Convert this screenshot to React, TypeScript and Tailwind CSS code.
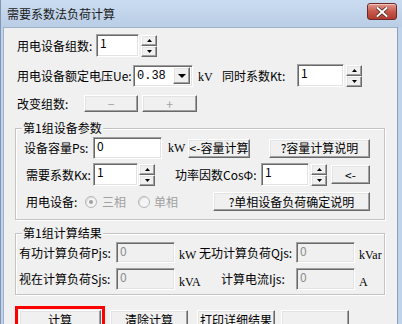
import type { ReactNode } from "react";

const sunken =
  "border border-t-[#a0a0a0] border-l-[#a0a0a0] border-r-white border-b-white shadow-[inset_1px_1px_#696969,inset_-1px_-1px_#e3e3e3]";
const raised =
  "border border-t-white border-l-white border-r-[#696969] border-b-[#696969] shadow-[inset_-1px_-1px_#a0a0a0,inset_1px_1px_#e3e3e3] bg-[#f0f0f0]";

function Field({ className, value, off }: { className: string; value: string; off?: boolean }) {
  return (
    <div
      className={`${sunken} ${off ? "bg-[#f0f0f0] text-[#8d8d8d]" : "bg-white text-black"} pl-[3px] pt-[1px] leading-[14px] ${className}`}
    >
      {value}
    </div>
  );
}

function Spin({ className }: { className: string }) {
  return (
    <div className={`flex flex-col ${className}`}>
      <div className={`${raised} flex flex-1 items-center justify-center`}>
        <svg width="5" height="3" viewBox="0 0 5 3">
          <path d="M2.5 0L5 3H0z" fill="#000" />
        </svg>
      </div>
      <div className={`${raised} flex flex-1 items-center justify-center`}>
        <svg width="5" height="3" viewBox="0 0 5 3">
          <path d="M0 0H5L2.5 3z" fill="#000" />
        </svg>
      </div>
    </div>
  );
}

function Btn({ className, children }: { className: string; children?: ReactNode }) {
  return (
    <div className={`${raised} flex items-center justify-center leading-[14px] ${className}`}>{children}</div>
  );
}

function Radio({ on }: { on?: boolean }) {
  return (
    <div className="flex h-[12px] w-[12px] items-center justify-center rounded-full border border-[#b5b5b5] bg-[#f4f4f4] shadow-[inset_1px_1px_#dcdcdc]">
      {on && <div className="h-[4px] w-[4px] rounded-full bg-[#a0a0a0]" />}
    </div>
  );
}

const unit = "font-['Liberation_Serif',serif] text-[12px] leading-[14px]";

export default function App() {
  return (
    <div className="flex h-[324px] w-[402px] flex-col overflow-hidden bg-[#bfd3ea] font-['Noto_Sans_CJK_SC',sans-serif] text-[12px] leading-[14px] text-black">
      {/* title bar */}
      <div className="flex h-[27px] shrink-0 items-center border-l border-[#7f97b3] bg-gradient-to-b from-[#cadcf0] to-[#b9cde5] pl-[6px] pr-[5px]">
        <div className="flex-1 text-[12px] text-[#1b1b1b]">需要系数法负荷计算</div>
        <div className="mb-[4px] flex h-[17px] w-[30px] items-center justify-center rounded-[3px] border border-[#6b2a28] bg-gradient-to-b from-[#e0988c] via-[#c8584b] to-[#b2392f] shadow-[inset_0_1px_#f1c3bb]">
          <svg width="12" height="10" viewBox="0 0 12 10">
            <path d="M1.5 1l9 8M10.5 1l-9 8" stroke="#4a2320" strokeWidth="3.4" strokeLinecap="square" />
            <path d="M1.5 1l9 8M10.5 1l-9 8" stroke="#fff" strokeWidth="2" strokeLinecap="square" />
          </svg>
        </div>
      </div>

      <div className="flex flex-1">
        <div className="w-[3px] border-l border-[#7f97b3]" />
        <div className="flex flex-1 flex-col border-l border-t border-[#9fb1c6] bg-[#f0f0f0]">
          {/* row 1 */}
          <div className="mt-[6px] flex h-[23px] items-center">
            <div className="ml-[13px] w-[79px] whitespace-nowrap">用电设备组数:</div>
            <Field className="h-[23px] w-[43px]" value="1" />
            <Spin className="ml-[2px] h-[22px] w-[16px]" />
          </div>

          {/* row 2 */}
          <div className="mt-[7px] flex h-[23px] items-center">
            <div className="ml-[13px] w-[116px] whitespace-nowrap">用电设备额定电压Ue:</div>
            <div className={`${sunken} flex h-[22px] w-[60px] items-center bg-white pl-[3px] pr-[2px]`}>
              <span className="flex-1 font-['Liberation_Mono',monospace] text-[12px]">0.38</span>
              <div className={`${raised} flex h-[17px] w-[17px] items-center justify-center`}>
                <svg width="8" height="4" viewBox="0 0 8 4">
                  <path d="M0 0H8L4 4z" fill="#000" />
                </svg>
              </div>
            </div>
            <div className={`ml-[5px] w-[24px] pt-[3px] ${unit}`}>kV</div>
            <div className="w-[75px] whitespace-nowrap">同时系数Kt:</div>
            <Field className="h-[23px] w-[47px]" value="1" />
            <Spin className="ml-[2px] h-[22px] w-[16px]" />
          </div>

          {/* row 3 */}
          <div className="mt-[8px] flex h-[17px] items-center">
            <div className="ml-[13px] w-[67px] whitespace-nowrap">改变组数:</div>
            <Btn className="h-[17px] w-[54px] text-[#a0a0a0]">−</Btn>
            <Btn className="ml-[4px] h-[17px] w-[55px] text-[#a0a0a0]">+</Btn>
          </div>

          {/* group 1 */}
          <div className="relative ml-[11px] mt-[16px] h-[92px] w-[370px] border border-[#c4c4c4] shadow-[1px_1px_#ffffff,inset_1px_1px_#ffffff]">
            <span className="absolute -top-[8px] left-[6px] bg-[#f0f0f0] px-[1px]">第1组设备参数</span>

            <div className="mt-[8px] flex h-[22px] items-center">
              <div className="ml-[8px] w-[69px] whitespace-nowrap">设备容量Ps:</div>
              <Field className="h-[22px] w-[69px]" value="0" />
              <div className={`ml-[6px] w-[20px] ${unit}`}>kW</div>
              <Btn className="h-[19px] w-[62px]">&lt;-容量计算</Btn>
              <Btn className="ml-[19px] h-[19px] w-[101px]">?容量计算说明</Btn>
            </div>

            <div className="mt-[4px] flex h-[23px] items-center">
              <div className="ml-[10px] w-[67px] whitespace-nowrap">需要系数Kx:</div>
              <Field className="h-[23px] w-[45px]" value="1" />
              <Spin className="ml-[1px] h-[22px] w-[16px]" />
              <div className="ml-[20px] w-[86px] whitespace-nowrap">功率因数CosΦ:</div>
              <Field className="h-[23px] w-[48px]" value="1" />
              <Spin className="ml-[2px] h-[22px] w-[16px]" />
              <Btn className="ml-[4px] h-[19px] w-[39px]">&lt;-</Btn>
            </div>

            <div className="mt-[6px] flex h-[19px] items-center">
              <div className="ml-[10px] w-[59px] whitespace-nowrap">用电设备:</div>
              <Radio on />
              <span className="ml-[5px] w-[36px] text-[#a0a0a0]">三相</span>
              <Radio />
              <span className="ml-[4px] w-[59px] text-[#a0a0a0]">单相</span>
              <Btn className="h-[19px] w-[157px]">?单相设备负荷确定说明</Btn>
            </div>
          </div>

          {/* group 2 */}
          <div className="relative ml-[11px] mt-[13px] h-[62px] w-[370px] border border-[#c4c4c4] shadow-[1px_1px_#ffffff,inset_1px_1px_#ffffff]">
            <span className="absolute -top-[8px] left-[6px] bg-[#f0f0f0] px-[1px]">第1组计算结果</span>

            <div className="mt-[8px] flex h-[21px] items-center">
              <div className="ml-[3px] w-[97px] whitespace-nowrap">有功计算负荷Pjs:</div>
              <Field className="h-[21px] w-[59px]" value="0" off />
              <div className={`ml-[4px] w-[20px] pt-[4px] ${unit}`}>kW</div>
              <div className="w-[97px] whitespace-nowrap">无功计算负荷Qjs:</div>
              <Field className="h-[21px] w-[59px]" value="0" off />
              <div className={`ml-[4px] pt-[4px] ${unit}`}>kVar</div>
            </div>

            <div className="mt-[5px] flex h-[22px] items-center">
              <div className="ml-[3px] w-[97px] whitespace-nowrap">视在计算负荷Sjs:</div>
              <Field className="h-[22px] w-[59px]" value="0" off />
              <div className={`ml-[4px] w-[42px] pt-[6px] ${unit}`}>kVA</div>
              <div className="w-[75px] whitespace-nowrap">计算电流Ijs:</div>
              <Field className="h-[22px] w-[59px]" value="0" off />
              <div className={`ml-[4px] pt-[6px] ${unit}`}>A</div>
            </div>
          </div>

          {/* bottom buttons */}
          <div className="mt-[11px] flex items-start">
            <div className="ml-[11px] h-[30px] w-[90px] border-[3px] border-[#ff0000] p-[1px]">
              <Btn className="h-full w-full items-start pt-[2px]">计算</Btn>
            </div>
            <Btn className="ml-[5px] mt-[4px] h-[24px] w-[78px] items-start pt-[2px]">清除计算</Btn>
            <Btn className="ml-[9px] mt-[4px] h-[24px] w-[78px] items-start pt-[2px]">打印详细结果</Btn>
            <Btn className="ml-[6px] mt-[4px] h-[24px] w-[68px]" />
          </div>
        </div>
        <div className="w-[5px] border-l border-[#8aa0b9]" />
      </div>
    </div>
  );
}
